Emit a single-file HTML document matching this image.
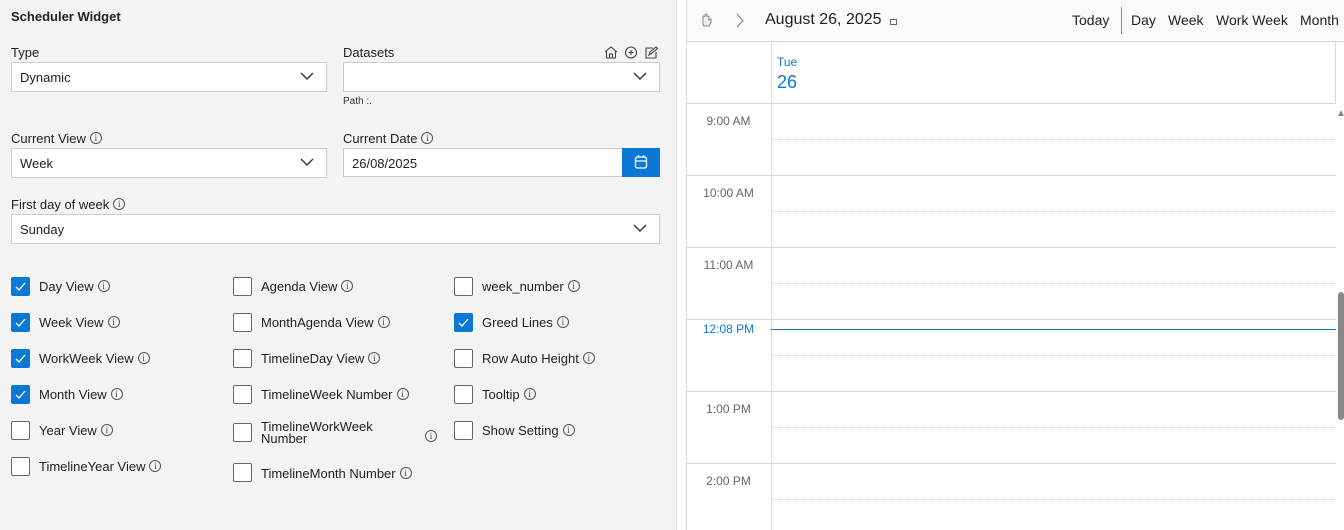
<!DOCTYPE html>
<html><head><style>
*{box-sizing:border-box;margin:0;padding:0}
body{width:1344px;height:530px;overflow:hidden;font-family:"Liberation Sans",sans-serif;background:#fff;position:relative;color:#222}
.a{position:absolute}
#left{left:0;top:0;width:677px;height:530px;background:#f3f3f3;border-right:1px solid #ddd}
.lbl{font-size:13px;color:#222;position:absolute}
.inp{position:absolute;background:#fff;border:1px solid #ccc;height:30px;font-size:13px;padding:7px 8px;color:#222}
.chev{position:absolute;right:12px;top:8px;width:14px;height:10px}
.info{display:inline-block;width:12px;height:12px;border:1px solid #555;border-radius:50%;font-size:9px;line-height:10px;text-align:center;vertical-align:0;position:relative;top:-2px;margin-left:4px;color:#444;font-family:"Liberation Serif",serif}
.cb{position:absolute;width:19px;height:19px;border:1px solid #666;background:#fff;border-radius:2px}
.cb.on{background:#0a78d4;border-color:#0a78d4}
.ct{position:absolute;font-size:13px;color:#222}
.hr{position:absolute;left:771px;width:565px;border-top:1px solid #d8d8d8}
.hh{position:absolute;left:771px;width:565px;border-top:1px dotted #ccc}
.tl{position:absolute;left:686px;width:85px;border-top:1px solid #d8d8d8}
.tm{position:absolute;left:686px;width:85px;text-align:center;font-size:12px;color:#666}
</style></head><body>
<div id="left" class="a">
<div class="a" style="left:11px;top:9px;font-size:13px;font-weight:bold">Scheduler Widget</div>

<div class="lbl" style="left:11px;top:45px">Type</div>
<div class="inp" style="left:11px;top:62px;width:316px">Dynamic<svg class="chev" viewBox="0 0 14 10"><path d="M1 2l6 6 6-6" fill="none" stroke="#333" stroke-width="1.4"/></svg></div>

<div class="lbl" style="left:343px;top:45px">Datasets</div>
<svg class="a" style="left:603px;top:45px" width="56" height="15" viewBox="0 0 56 15"><path d="M2 7l6-5 6 5M3.5 6v7h9V6M6.5 13V9h3v4" fill="none" stroke="#444" stroke-width="1.1"/><circle cx="28" cy="7.5" r="5.5" fill="none" stroke="#444" stroke-width="1.1"/><path d="M28 5v5M25.5 7.5h5" stroke="#444" stroke-width="1.1"/><path d="M50 3H43v10h10V7M46 10l1-3 6-5 1.5 1.5-6 5z" fill="none" stroke="#444" stroke-width="1.1"/></svg>
<div class="inp" style="left:343px;top:62px;width:317px"><svg class="chev" viewBox="0 0 14 10"><path d="M1 2l6 6 6-6" fill="none" stroke="#333" stroke-width="1.4"/></svg></div>
<div class="a" style="left:343px;top:96px;font-size:10px;color:#333">Path :.</div>

<div class="lbl" style="left:11px;top:131px">Current View<span class="info">i</span></div>
<div class="inp" style="left:11px;top:148px;width:316px">Week<svg class="chev" viewBox="0 0 14 10"><path d="M1 2l6 6 6-6" fill="none" stroke="#333" stroke-width="1.4"/></svg></div>

<div class="lbl" style="left:343px;top:131px">Current Date<span class="info">i</span></div>
<div class="inp" style="left:343px;top:148px;width:280px;height:29px">26/08/2025</div>
<div class="a" style="left:622px;top:148px;width:38px;height:29px;background:#0a78d4"><svg style="position:absolute;left:12px;top:6px" width="14" height="16" viewBox="0 0 14 16"><rect x="1.5" y="3" width="11" height="11" rx="2" fill="none" stroke="#fff" stroke-width="1.3"/><path d="M1.5 7h11M4.5 1v3M9.5 1v3" stroke="#fff" stroke-width="1.3"/></svg></div>

<div class="lbl" style="left:11px;top:197px">First day of week<span class="info">i</span></div>
<div class="inp" style="left:11px;top:214px;width:649px">Sunday<svg class="chev" viewBox="0 0 14 10"><path d="M1 2l6 6 6-6" fill="none" stroke="#333" stroke-width="1.4"/></svg></div>

<div class="cb on" style="left:11px;top:277px"><svg width="17" height="17"><path d="M4 9l3 3 6-7" fill="none" stroke="#fff" stroke-width="1.3"/></svg></div><div class="ct" style="left:39px;top:279px">Day View<span class="info">i</span></div>
<div class="cb on" style="left:11px;top:313px"><svg width="17" height="17"><path d="M4 9l3 3 6-7" fill="none" stroke="#fff" stroke-width="1.3"/></svg></div><div class="ct" style="left:39px;top:315px">Week View<span class="info">i</span></div>
<div class="cb on" style="left:11px;top:349px"><svg width="17" height="17"><path d="M4 9l3 3 6-7" fill="none" stroke="#fff" stroke-width="1.3"/></svg></div><div class="ct" style="left:39px;top:351px">WorkWeek View<span class="info">i</span></div>
<div class="cb on" style="left:11px;top:385px"><svg width="17" height="17"><path d="M4 9l3 3 6-7" fill="none" stroke="#fff" stroke-width="1.3"/></svg></div><div class="ct" style="left:39px;top:387px">Month View<span class="info">i</span></div>
<div class="cb" style="left:11px;top:421px"></div><div class="ct" style="left:39px;top:423px">Year View<span class="info">i</span></div>
<div class="cb" style="left:11px;top:457px"></div><div class="ct" style="left:39px;top:459px">TimelineYear View<span class="info">i</span></div>

<div class="cb" style="left:233px;top:277px"></div><div class="ct" style="left:261px;top:279px">Agenda View<span class="info">i</span></div>
<div class="cb" style="left:233px;top:313px"></div><div class="ct" style="left:261px;top:315px">MonthAgenda View<span class="info">i</span></div>
<div class="cb" style="left:233px;top:349px"></div><div class="ct" style="left:261px;top:351px">TimelineDay View<span class="info">i</span></div>
<div class="cb" style="left:233px;top:385px"></div><div class="ct" style="left:261px;top:387px">TimelineWeek Number<span class="info">i</span></div>
<div class="cb" style="left:233px;top:423px"></div><div class="ct" style="left:261px;top:421px;line-height:12px">TimelineWorkWeek<br>Number</div><span class="info a" style="left:421px;top:426px">i</span>
<div class="cb" style="left:233px;top:463px"></div><div class="ct" style="left:261px;top:466px">TimelineMonth Number<span class="info">i</span></div>

<div class="cb" style="left:454px;top:277px"></div><div class="ct" style="left:482px;top:279px">week_number<span class="info">i</span></div>
<div class="cb on" style="left:454px;top:313px"><svg width="17" height="17"><path d="M4 9l3 3 6-7" fill="none" stroke="#fff" stroke-width="1.3"/></svg></div><div class="ct" style="left:482px;top:315px">Greed Lines<span class="info">i</span></div>
<div class="cb" style="left:454px;top:349px"></div><div class="ct" style="left:482px;top:351px">Row Auto Height<span class="info">i</span></div>
<div class="cb" style="left:454px;top:385px"></div><div class="ct" style="left:482px;top:387px">Tooltip<span class="info">i</span></div>
<div class="cb" style="left:454px;top:421px"></div><div class="ct" style="left:482px;top:423px">Show Setting<span class="info">i</span></div>
</div>

<div class="a" style="left:686px;top:0;width:1px;height:530px;background:#d8d8d8"></div>
<div class="a" style="left:687px;top:0;width:657px;height:42px;background:#fafafa;border-bottom:1px solid #d8d8d8"></div>
<svg class="a" style="left:699px;top:12px" width="14" height="16" viewBox="0 0 14 16"><path d="M4 13V5a1 1 0 0 1 2 0v-2a1 1 0 0 1 2 0v2a1 1 0 0 1 2 0v3l2-1v3l-2 4H5z" fill="#eee" stroke="#888" stroke-width="1"/></svg>
<svg class="a" style="left:735px;top:13px" width="10" height="15"><path d="M2 1l6 6.5L2 14" fill="none" stroke="#888" stroke-width="1.2"/></svg>
<div class="a" style="left:765px;top:11px;font-size:16px;color:#222">August 26, 2025</div>
<div class="a" style="left:890px;top:19px;width:7px;height:6px;border:1.5px solid #666"></div>
<div class="a" style="left:1072px;top:12px;font-size:14px">Today</div>
<div class="a" style="left:1121px;top:7px;width:1px;height:27px;background:#888"></div>
<div class="a" style="left:1131px;top:12px;font-size:14px">Day</div>
<div class="a" style="left:1168px;top:12px;font-size:14px">Week</div>
<div class="a" style="left:1216px;top:12px;font-size:14px">Work Week</div>
<div class="a" style="left:1300px;top:12px;font-size:14px">Month</div>

<div class="a" style="left:771px;top:42px;width:1px;height:488px;background:#d8d8d8"></div>
<div class="a" style="left:1335px;top:42px;width:1px;height:61px;background:#d8d8d8"></div>
<div class="a" style="left:777px;top:55px;font-size:12px;color:#0a78d4">Tue</div>
<div class="a" style="left:777px;top:72px;font-size:18px;color:#0a78d4">26</div>
<div class="a" style="left:686px;top:103px;width:650px;border-top:1px solid #d8d8d8"></div>

<div class="hh" style="top:139px"></div>
<div class="tl" style="top:175px"></div><div class="hr" style="top:175px"></div><div class="hh" style="top:211px"></div>
<div class="tl" style="top:247px"></div><div class="hr" style="top:247px"></div><div class="hh" style="top:283px"></div>
<div class="tl" style="top:319px"></div><div class="hr" style="top:319px"></div><div class="hh" style="top:355px"></div>
<div class="tl" style="top:391px"></div><div class="hr" style="top:391px"></div><div class="hh" style="top:427px"></div>
<div class="tl" style="top:463px"></div><div class="hr" style="top:463px"></div><div class="hh" style="top:499px"></div>
<div class="tm" style="top:114px">9:00 AM</div>
<div class="tm" style="top:186px">10:00 AM</div>
<div class="tm" style="top:258px">11:00 AM</div>
<div class="tm" style="top:322px;color:#0a78d4">12:08 PM</div>
<div class="tm" style="top:402px">1:00 PM</div>
<div class="tm" style="top:474px">2:00 PM</div>
<div class="a" style="left:771px;top:329px;width:565px;height:1px;background:#0a78d4"></div>
<div class="a" style="left:1338px;top:110px;width:0;height:0;border-left:3px solid transparent;border-right:3px solid transparent;border-bottom:6px solid #888"></div>
<div class="a" style="left:1338px;top:292px;width:6px;height:128px;background:#888;border-radius:3px"></div>
</body></html>
